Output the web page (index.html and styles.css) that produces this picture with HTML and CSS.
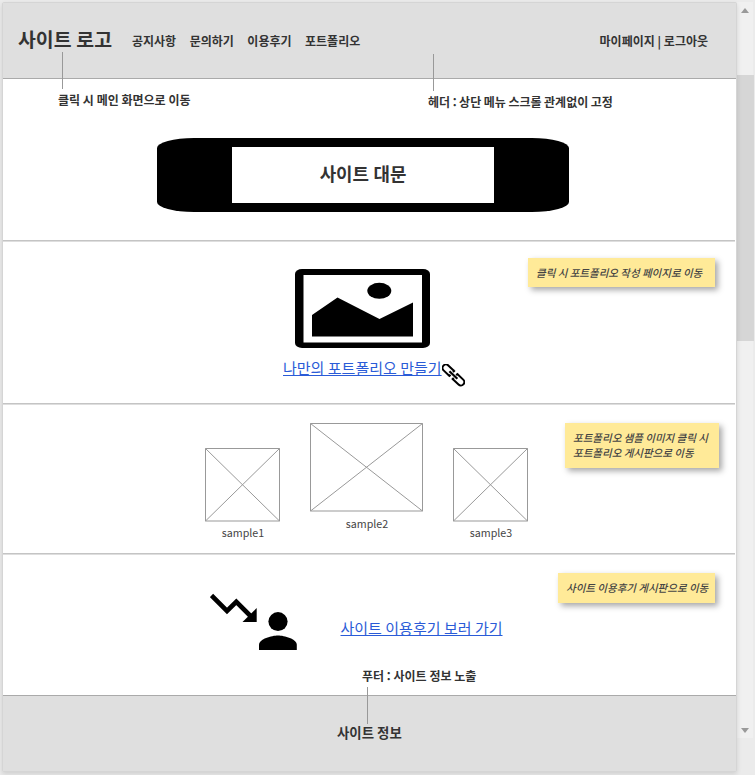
FILE: index.html
```html
<!DOCTYPE html>
<html lang="ko">
<head>
<meta charset="utf-8">
<title>사이트 로고</title>
<link rel="stylesheet" href="styles.css">
</head>
<body>
<div class="window">
  <main class="page">
    <header class="header">
      <h1 class="logo">사이트 로고</h1>
      <nav class="nav"><span>공지사항</span><span>문의하기</span><span>이용후기</span><span>포트폴리오</span></nav>
      <div class="account">마이페이지 | 로그아웃</div>
      <div class="callout callout-logo"><i class="line"></i><span>클릭 시 메인 화면으로 이동</span></div>
      <div class="callout callout-header"><i class="line"></i><span>헤더 : 상단 메뉴 스크롤 관계없이 고정</span></div>
    </header>
    <section class="section hero">
      <div class="banner"><h2 class="banner-title">사이트 대문</h2></div>
    </section>
    <section class="section create">
      <svg class="picture" width="135" height="79" viewBox="0 0 135 79">
        <rect width="135" height="79" rx="7" ry="5"/>
        <rect x="8.5" y="6" width="118.5" height="67.5" fill="#fff"/>
        <path d="M17 46L42.5 28.5L84.5 50L118 33.5V67.5H17Z"/>
        <ellipse cx="84.3" cy="21.8" rx="12" ry="8"/>
      </svg>
      <div class="create-link">
        <a class="link">나만의 포트폴리오 만들기</a>
        <svg class="chain" width="23" height="23" viewBox="0 0 23 23" fill="none" stroke="#000" stroke-width="2">
          <g transform="translate(11.4 11) rotate(43.5)">
            <path d="M-2.2-3.4H-10.3A3.4 3.4 0 0 0-10.3 3.4H-2.2M2.2-3.4H10.3A3.4 3.4 0 0 1 10.3 3.4H2.2M-2.2-4.4V-1.8M-2.2 4.4V1.8M2.2-4.4V-1.8M2.2 4.4V1.8"/>
            <path d="M-5.5 0H5.5" stroke-width="2.2"/>
          </g>
        </svg>
      </div>
      <div class="note note-create">클릭 시 포트폴리오 작성 페이지로 이동</div>
    </section>
    <section class="section samples">
      <figure class="sample sample-small">
        <svg width="75" height="74" viewBox="0 0 75 74"><path d="M.5.5H74.5V73H.5ZM.5.5L74.5 73M74.5.5L.5 73"/></svg>
        <figcaption>sample1</figcaption>
      </figure>
      <figure class="sample sample-large">
        <svg width="113" height="89" viewBox="0 0 113 89"><path d="M.5.5H112.5V88H.5ZM.5.5L112.5 88M112.5.5L.5 88"/></svg>
        <figcaption>sample2</figcaption>
      </figure>
      <figure class="sample sample-small">
        <svg width="75" height="74" viewBox="0 0 75 74"><path d="M.5.5H74.5V73H.5ZM.5.5L74.5 73M74.5.5L.5 73"/></svg>
        <figcaption>sample3</figcaption>
      </figure>
      <div class="note note-samples">포트폴리오 샘플 이미지 클릭 시<br>포트폴리오 게시판으로 이동</div>
    </section>
    <section class="section reviews">
      <svg class="review-icon" width="88" height="58" viewBox="0 0 88 58">
        <path d="M1.5 3.5L17 19L26.3 9.8L42.5 26" fill="none" stroke="#000" stroke-width="4.6"/>
        <path d="M46.7 16V30H32.5Z"/>
        <ellipse cx="68" cy="29.6" rx="9.6" ry="9.5"/>
        <path d="M49 58V53C49 47 61.7 43.6 68 43.6S86.8 47 86.8 53V58Z"/>
      </svg>
      <a class="link">사이트 이용후기 보러 가기</a>
      <div class="note note-reviews">사이트 이용후기 게시판으로 이동</div>
    </section>
    <footer class="footer">
      <strong>사이트 정보</strong>
      <div class="callout callout-footer"><span>푸터 : 사이트 정보 노출</span><i class="line"></i></div>
    </footer>
  </main>
  <aside class="scrollbar">
    <i class="arrow arrow-up"></i>
    <div class="thumb"></div>
    <i class="arrow arrow-down"></i>
  </aside>
</div>
</body>
</html>
```

FILE: styles.css
```css
* { box-sizing: border-box; }
body {
  margin: 0;
  height: 775px;
  overflow: hidden;
  background: #ebebeb;
  color: #333;
  font-family: "Noto Sans CJK KR", sans-serif;
  font-size: 12px;
  line-height: 18px;
  word-spacing: -.6px;
}
.window { display: flex; align-items: flex-start; padding: 2px 0 0 2px; }
.page {
  width: 735px;
  height: 770px;
  flex: none;
  position: relative;
  z-index: 1;
  background: #fff;
  border: 1px solid #d5d5d5;
  border-radius: 2px;
  box-shadow: 0 2px 5px rgba(0, 0, 0, .12);
}
.header {
  position: relative;
  display: flex;
  align-items: center;
  height: 76px;
  padding: 0 28px 0 15px;
  background: #dfdfdf;
  border-bottom: 1px solid #aaa;
  font-weight: 700;
}
.logo { margin: -4px 0 0; width: 114px; font-size: 19.4px; line-height: 30px; }
.nav { display: flex; gap: 13.5px; }
.account { margin-left: auto; }
.section {
  position: relative;
  width: 732px;
  height: 163px;
  border-bottom: 1px solid #c4c4c4;
  box-shadow: inset 0 1px #dedede;
}
.header + .section { box-shadow: none; }
.hero { height: 162px; padding: 59px 0 0 154px; }
.banner {
  width: 412px;
  height: 74px;
  padding: 9px 75px;
  background: #000;
  border-radius: 37px / 10px;
}
.banner-title {
  margin: 0;
  height: 56px;
  background: #fff;
  font-size: 17.9px;
  line-height: 52px;
  text-align: center;
}
.create { height: 163px; padding: 28px 0 0 280px; }
.picture { display: block; margin-left: 12px; }
.create-link { display: flex; height: 40px; align-items: flex-start; padding-top: 8px; }
.link { color: #2a5bd7; font-size: 15px; line-height: 24px; text-decoration: underline; white-space: nowrap; word-spacing: -.8px; }
.chain { margin-top: 8px; }
.samples { display: flex; height: 150px; padding: 19px 0 0 202px; gap: 30px; }
.sample { margin: 0; text-align: center; }
.sample svg { display: block; fill: none; stroke: #999; stroke-width: 1; }
.sample-small { padding-top: 25px; }
.sample figcaption { margin-top: 3px; padding-left: 1px; color: #444; font-size: 10.7px; line-height: 18px; }
.sample-small figcaption { margin-top: 2px; }
.reviews { display: flex; height: 141px; padding: 38px 0 0 207px; border: 0; gap: 42.5px; }
.reviews .link { padding-top: 24px; }
.footer {
  position: relative;
  height: 76px;
  padding: 26px 0 0 334px;
  background: #dfdfdf;
  border-top: 1px solid #aaa;
  font-size: 13.4px;
  line-height: 20px;
}
.callout {
  position: absolute;
  display: flex;
  flex-direction: column;
  white-space: nowrap;
  font-size: 12px;
  line-height: 18px;
  font-weight: 700;
}
.line { width: 1px; height: 37px; margin-left: 5px; background: #999; }
.callout-logo { left: 54px; top: 49px; gap: 2px; }
.callout-logo span { padding-left: 1px; }
.callout-header { left: 425px; top: 51px; gap: 2px; word-spacing: -.8px; }
.callout-footer { left: 359px; top: -29px; gap: 2px; }
.note {
  position: absolute;
  padding: 7px 8px;
  background: #ffea98;
  box-shadow: 3px 3px 6px rgba(0, 0, 0, .35);
  color: #444;
  font-size: 10.5px;
  line-height: 15px;
  font-style: italic;
  font-weight: 500;
  white-space: nowrap;
}
.note-create { left: 525px; top: 17px; width: 187px; height: 29px; }
.note-samples { left: 562px; top: 19px; width: 154px; height: 45px; }
.note-reviews { left: 555px; top: 19px; width: 157px; height: 30px; }
.scrollbar {
  display: flex;
  flex-direction: column;
  align-items: center;
  width: 16px;
  height: 736px;
  background: #f0f0f0;
}
.thumb { width: 17px; height: 266px; margin-top: 62px; background: #d6d6d6; }
.arrow { border: 4px solid transparent; border-top-width: 0; border-bottom: 5px solid #999; }
.arrow-up { margin-top: 6px; }
.arrow-down { margin-top: auto; margin-bottom: 5px; border-bottom-width: 0; border-top: 5px solid #999; }
```
